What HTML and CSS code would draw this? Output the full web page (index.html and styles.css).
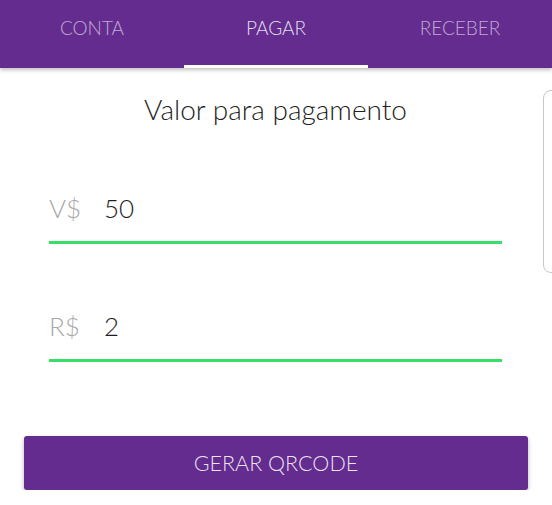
FILE: index.html
```html
<!DOCTYPE html>
<html lang="pt">
<head>
<meta charset="utf-8">
<link rel="stylesheet" href="styles.css">
</head>
<body>
<header class="tabs">
  <div class="tab">CONTA</div>
  <div class="tab active">PAGAR</div>
  <div class="tab">RECEBER</div>
</header>
<main class="page">
  <h1 class="title">Valor para pagamento</h1>
  <div class="field field-first">
    <span class="prefix">V$</span>
    <span class="value">50</span>
  </div>
  <div class="field">
    <span class="prefix">R$</span>
    <span class="value">2</span>
  </div>
  <button class="btn">GERAR QRCODE</button>
</main>
<div class="peek-card"></div>
</body>
</html>
```
FILE: styles.css
```css
html, body {
  margin: 0;
  padding: 0;
  background: #ffffff;
  font-family: "Lato", "Open Sans", sans-serif;
  overflow: hidden;
}
.tabs {
  display: flex;
  height: 68px;
  background: #652c90;
  box-shadow: 0 2px 4px rgba(0,0,0,0.25);
  position: relative;
  z-index: 2;
}
.tab {
  flex: 1;
  box-sizing: border-box;
  display: flex;
  justify-content: center;
  padding-top: 16px;
  font-size: 19px;
  font-weight: 300;
  line-height: 24px;
  color: rgba(255,255,255,0.6);
  border-bottom: 3px solid transparent;
}
.tab.active {
  color: rgba(255,255,255,0.85);
  border-bottom-color: #ffffff;
}
.page {
  display: flex;
  flex-direction: column;
  padding: 0 50px 0 49px;
}
.title {
  margin: 24px 0 0 0;
  text-align: center;
  font-size: 28px;
  line-height: 34px;
  font-weight: 300;
  color: #1e1e1e;
}
.field {
  display: flex;
  align-items: baseline;
  margin-top: 66px;
  padding-bottom: 17px;
  border-bottom: 3px solid #38de68;
  font-size: 26px;
  line-height: 32px;
  font-weight: 300;
}
.prefix {
  color: #a8a8a8;
  width: 55px;
}
.value {
  color: #1e1e1e;
}
.btn {
  margin: 74px -26px 0 -25px;
  height: 54px;
  border: none;
  border-radius: 3px;
  background: #652c90;
  color: rgba(255,255,255,0.88);
  font-family: "Lato", "Open Sans", sans-serif;
  font-size: 21.5px;
  font-weight: 300;
  box-shadow: 0 2px 4px rgba(0,0,0,0.3);
}
.peek-card {
  position: absolute;
  left: 543px;
  top: 90px;
  width: 30px;
  height: 181px;
  border: 1px solid #c8c8c8;
  border-radius: 8px;
}
```
